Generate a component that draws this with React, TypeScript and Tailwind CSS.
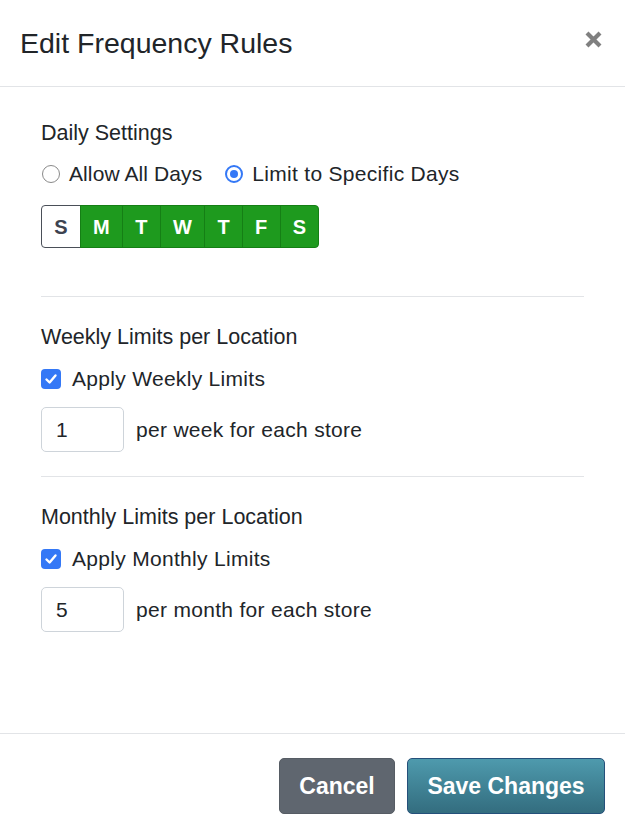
import React from "react";

const days = [
  { l: "S", on: false },
  { l: "M", on: true },
  { l: "T", on: true },
  { l: "W", on: true },
  { l: "T", on: true },
  { l: "F", on: true },
  { l: "S", on: true },
];

function Check() {
  return (
    <span className="w-[20px] h-[20px] rounded-[4px] bg-[#3478f6] flex items-center justify-center shrink-0">
      <svg width="14" height="14" viewBox="0 0 14 14">
        <path d="M2.5 7.5 L5.6 10.5 L11.5 3.5" fill="none" stroke="white" strokeWidth="2.4" strokeLinecap="round" strokeLinejoin="round" />
      </svg>
    </span>
  );
}

export default function App() {
  return (
    <div
      className="w-[625px] h-[832px] bg-white flex flex-col text-[#212529]"
      style={{ fontFamily: '"Liberation Sans", Arial, sans-serif' }}
    >
      <div className="h-[87px] border-b border-[#e2e4e7] flex items-center justify-between pl-[20px] pr-[22px] shrink-0">
        <h1 className="text-[28.5px] leading-none">Edit Frequency Rules</h1>
        <svg width="19" height="19" viewBox="0 0 19 19" className="mb-[8px]">
          <path d="M3 3 L16 16 M16 3 L3 16" stroke="#808080" strokeWidth="4.2" strokeLinecap="butt" />
        </svg>
      </div>

      <div className="flex-1 px-[41px] pt-[34px]">
        <h2 className="text-[21.5px] leading-[25px]">Daily Settings</h2>
        <div className="mt-[12px] h-[31px] flex items-center text-[21px] tracking-[0.3px]">
          <span className="w-[18px] h-[18px] rounded-full border border-[#8a8a8a] ml-[1px]" />
          <span className="ml-[9px] tracking-[0.1px]">Allow All Days</span>
          <span className="ml-[23px] w-[18px] h-[18px] rounded-full border-[2.5px] border-[#3478f6] flex items-center justify-center">
            <span className="w-[8px] h-[8px] rounded-full bg-[#3478f6]" />
          </span>
          <span className="ml-[9px]">Limit to Specific Days</span>
        </div>
        <div className="mt-[16px] flex">
          {days.map((d, i) => (
            <div
              key={i}
              className={
                d.on
                  ? "h-[43px] px-[12.25px] flex items-center justify-center bg-[#1e9a1e] border border-[#157f15] -ml-px text-white font-bold text-[20px]" +
                    (i === days.length - 1 ? " rounded-r-[4px]" : "")
                  : "h-[43px] px-[12.25px] flex items-center justify-center bg-white border border-[#4a4f58] rounded-l-[4px] text-[#3d4350] font-bold text-[20px]"
              }
            >
              {d.l}
            </div>
          ))}
        </div>

        <div className="mt-[48px] border-t border-[#e2e4e7]" />

        <h2 className="mt-[28px] text-[21.5px] leading-[25px]">Weekly Limits per Location</h2>
        <div className="mt-[13px] h-[31px] flex items-center text-[21px] tracking-[0.3px]">
          <Check />
          <span className="ml-[11px]">Apply Weekly Limits</span>
        </div>
        <div className="mt-[13px] flex items-center text-[21px] tracking-[0.3px]">
          <div className="w-[83px] h-[45px] border border-[#ced4da] rounded-[5px] flex items-center px-[14px]">1</div>
          <span className="ml-[12px]">per week for each store</span>
        </div>

        <div className="mt-[24px] border-t border-[#e2e4e7]" />

        <h2 className="mt-[28px] text-[21.5px] leading-[25px]">Monthly Limits per Location</h2>
        <div className="mt-[13px] h-[31px] flex items-center text-[21px] tracking-[0.3px]">
          <Check />
          <span className="ml-[11px]">Apply Monthly Limits</span>
        </div>
        <div className="mt-[13px] flex items-center text-[21px] tracking-[0.3px]">
          <div className="w-[83px] h-[45px] border border-[#ced4da] rounded-[5px] flex items-center px-[14px]">5</div>
          <span className="ml-[12px]">per month for each store</span>
        </div>
      </div>

      <div className="h-[99px] border-t border-[#e2e4e7] flex justify-end items-start pt-[24px] pr-[20px] gap-[12px] shrink-0">
        <button className="w-[116px] h-[56px] rounded-[5px] bg-[#5f666f] border border-[#565c64] text-white font-bold text-[23px]">
          Cancel
        </button>
        <button className="w-[198px] h-[56px] rounded-[5px] bg-gradient-to-b from-[#4e9aad] to-[#336d7f] border border-[#25507a] text-white font-bold text-[23px]">
          Save Changes
        </button>
      </div>
    </div>
  );
}
